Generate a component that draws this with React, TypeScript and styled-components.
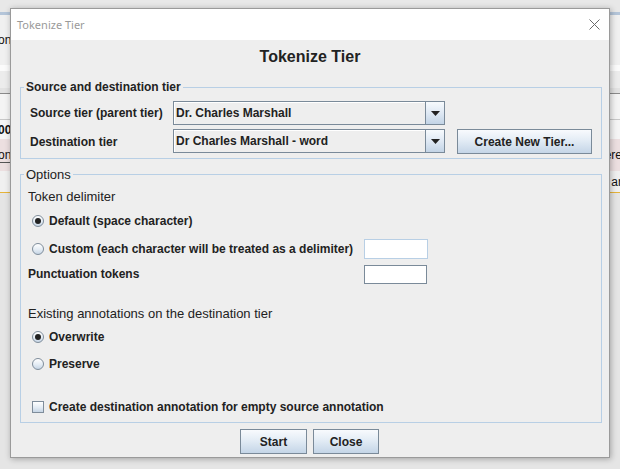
import React from "react";
import styled, { createGlobalStyle } from "styled-components";

const Global = createGlobalStyle`
  html, body { margin: 0; padding: 0; width: 620px; height: 469px; overflow: hidden; }
  body { font-family: "Liberation Sans", Arial, sans-serif; }
  * { box-sizing: border-box; }
`;

const Page = styled.div`
  position: relative;
  width: 620px;
  height: 469px;
  overflow: hidden;
  background: #e4e4e4;
`;

/* ---------- background application (mostly hidden by the dialog) ---------- */
const Backdrop = styled.div`
  display: flex;
  flex-direction: column;
  width: 620px;
`;

const Band = styled.div<{ $h: number; $bg: string; $line?: string }>`
  height: ${(p) => p.$h}px;
  background: ${(p) => p.$bg};
  border-bottom: ${(p) => (p.$line ? `1px solid ${p.$line}` : "none")};
  display: flex;
  justify-content: space-between;
  align-items: center;
  font-size: 12px;
  color: #111;
  overflow: hidden;
`;

const BgText = styled.span<{ $bold?: boolean; $under?: string }>`
  font-weight: ${(p) => (p.$bold ? 700 : 400)};
  margin-left: -2px;
  margin-right: -2px;
  border-bottom: ${(p) => (p.$under ? `1px solid ${p.$under}` : "none")};
  line-height: 14px;
`;

/* ---------- dialog ---------- */
const Dialog = styled.div`
  position: absolute;
  left: 10px;
  top: 8px;
  width: 600px;
  height: 450px;
  border: 1px solid #9a9a9a;
  display: flex;
  flex-direction: column;
  box-shadow: 1px 1px 6px rgba(0, 0, 0, 0.3);
`;

const TitleBar = styled.div`
  height: 31px;
  background: #ffffff;
  display: flex;
  align-items: center;
  justify-content: space-between;
  padding: 0 9px 0 6px;
`;

const TitleText = styled.span`
  font-family: "Noto Sans", "Open Sans", sans-serif;
  font-size: 11px;
  color: #9a9a9a;
`;

const Body = styled.div`
  flex: 1;
  background: #eeeeee;
  padding: 0 7px 0 9px;
  display: flex;
  flex-direction: column;
`;

const Header = styled.div`
  height: 34px;
  line-height: 34px;
  text-align: center;
  font-weight: 700;
  font-size: 16px;
  color: #222;
  padding-right: 2px;
`;

const Panel = styled.div<{ $mt: number; $pt: number; $pl: number; $pr: number; $pb: number }>`
  position: relative;
  margin-top: ${(p) => p.$mt}px;
  border: 1px solid #b8cfe5;
  padding: ${(p) => `${p.$pt}px ${p.$pr}px ${p.$pb}px ${p.$pl}px`};
`;

const Legend = styled.span<{ $bold?: boolean }>`
  position: absolute;
  top: -8px;
  left: 3px;
  padding: 0 2px;
  background: #eeeeee;
  font-size: ${(p) => (p.$bold ? 12 : 13)}px;
  line-height: 15px;
  font-weight: ${(p) => (p.$bold ? 700 : 400)};
  color: #222;
`;

const TierGrid = styled.div`
  display: grid;
  grid-template-columns: 143px 272px 147px;
  grid-template-rows: 24px 25px;
  row-gap: 4px;
`;

const FieldLabel = styled.span<{ $bold?: boolean }>`
  display: flex;
  align-items: center;
  font-size: ${(p) => (p.$bold ? 12 : 13)}px;
  font-weight: ${(p) => (p.$bold ? 700 : 400)};
  color: #222;
  white-space: nowrap;
`;

const Combo = styled.div`
  display: flex;
  height: 24px;
  border: 1px solid #7a8a99;
  background: #eeeeee;
`;

const ComboText = styled.div`
  flex: 1;
  display: flex;
  align-items: center;
  padding-left: 2px;
  font-size: 12px;
  font-weight: 700;
  color: #222;
  box-shadow: inset 1px 1px 0 #ffffff;
`;

const ComboArrow = styled.div`
  width: 19px;
  border-left: 1px solid #7a8a99;
  background: linear-gradient(to bottom, #f7fafd 0%, #dfe9f4 50%, #c3d4e6 100%);
  display: flex;
  align-items: center;
  justify-content: center;
`;

const Button = styled.button<{ $w: number }>`
  width: ${(p) => p.$w}px;
  height: 25px;
  justify-self: end;
  border: 1px solid #7a8a99;
  border-radius: 0;
  padding: 0;
  background: linear-gradient(to bottom, #f8fafd 0%, #e3ecf5 45%, #c4d5e7 100%);
  font-family: "Liberation Sans", Arial, sans-serif;
  font-size: 12px;
  font-weight: 700;
  color: #222;
`;

const Row = styled.div<{ $mt: number; $h: number }>`
  display: flex;
  align-items: center;
  margin-top: ${(p) => p.$mt}px;
  height: ${(p) => p.$h}px;
`;

const Choice = styled.label`
  display: flex;
  align-items: center;
  padding-left: 4px;
  font-size: 12px;
  font-weight: 700;
  color: #222;
  white-space: nowrap;
`;

const RadioDot = styled.span<{ $on?: boolean }>`
  width: 12px;
  height: 12px;
  margin-right: 5px;
  border-radius: 50%;
  border: 1px solid #7f8d9b;
  background: linear-gradient(to bottom, #ffffff 0%, #e4ecf4 55%, #c6d5e5 100%);
  display: flex;
  align-items: center;
  justify-content: center;
  &::after {
    content: "";
    display: ${(p) => (p.$on ? "block" : "none")};
    width: 6px;
    height: 6px;
    border-radius: 50%;
    background: #222;
  }
`;

const CheckBox = styled.span`
  width: 12px;
  height: 12px;
  margin-right: 5px;
  border: 1px solid #7f8d9b;
  background: linear-gradient(to bottom, #ffffff 0%, #e4ecf4 55%, #c6d5e5 100%);
`;

const OptGrid = styled.div`
  margin-top: 6px;
  display: grid;
  grid-template-columns: 336px 64px;
  grid-template-rows: 22px 20px;
  row-gap: 4px;
  align-items: center;
`;

const TextBox = styled.div<{ $dark?: boolean }>`
  width: ${(p) => (p.$dark ? 63 : 64)}px;
  height: ${(p) => (p.$dark ? 19 : 20)}px;
  background: #ffffff;
  border: 1px solid ${(p) => (p.$dark ? "#7a8a99" : "#b8cfe5")};
`;

const ButtonRow = styled.div`
  margin-top: 6px;
  display: flex;
  justify-content: center;
  gap: 6px;
  padding-right: 3px;
`;

const CloseIcon = () => (
  <svg width="11" height="11" viewBox="0 0 11 11">
    <path d="M0.5 0.5 L10.5 10.5 M10.5 0.5 L0.5 10.5" stroke="#6a6a6a" strokeWidth="1" fill="none" />
  </svg>
);

const Triangle = () => (
  <svg width="9" height="5" viewBox="0 0 9 5">
    <polygon points="0,0 9,0 4.5,5" fill="#222" />
  </svg>
);

export default function App() {
  return (
    <Page>
      <Global />
      <Backdrop>
        <Band $h={12} $bg="#e8e8e8" />
        <Band $h={3} $bg="#b4c5d9" />
        <Band $h={50} $bg="#f0f0f0">
          <BgText>on</BgText>
          <span />
        </Band>
        <Band $h={6} $bg="#fbfbfb" />
        <Band $h={17} $bg="#ececec" />
        <Band $h={6} $bg="#e2e2e2" $line="#8a8a8a" />
        <Band $h={26} $bg="#f4f4f4" $line="#c8c8c8" />
        <Band $h={19} $bg="#f5f5f5">
          <BgText $bold>00:</BgText>
          <span />
        </Band>
        <Band $h={32} $bg="#ecdfe0">
          <BgText $under="#555">on</BgText>
          <BgText>ere</BgText>
        </Band>
        <Band $h={22} $bg="#f0f0f0" $line="#e6b43a">
          <span />
          <BgText>ar</BgText>
        </Band>
        <Band $h={280} $bg="#e5e5e5" />
      </Backdrop>

      <Dialog>
        <TitleBar>
          <TitleText>Tokenize Tier</TitleText>
          <CloseIcon />
        </TitleBar>
        <Body>
          <Header>Tokenize Tier</Header>

          <Panel $mt={13} $pt={13} $pl={9} $pr={8} $pb={4}>
            <Legend $bold>Source and destination tier</Legend>
            <TierGrid>
              <FieldLabel $bold>Source tier (parent tier)</FieldLabel>
              <Combo>
                <ComboText>Dr. Charles Marshall</ComboText>
                <ComboArrow>
                  <Triangle />
                </ComboArrow>
              </Combo>
              <span />
              <FieldLabel $bold>Destination tier</FieldLabel>
              <Combo>
                <ComboText>Dr Charles Marshall - word</ComboText>
                <ComboArrow>
                  <Triangle />
                </ComboArrow>
              </Combo>
              <Button $w={135}>Create New Tier...</Button>
            </TierGrid>
          </Panel>

          <Panel $mt={15} $pt={12} $pl={7} $pr={8} $pb={4}>
            <Legend>Options</Legend>
            <Row $mt={0} $h={18}>
              <FieldLabel>Token delimiter</FieldLabel>
            </Row>
            <Row $mt={5} $h={22}>
              <Choice>
                <RadioDot $on />
                Default (space character)
              </Choice>
            </Row>
            <OptGrid>
              <Choice>
                <RadioDot />
                Custom (each character will be treated as a delimiter)
              </Choice>
              <TextBox />
              <FieldLabel $bold>Punctuation tokens</FieldLabel>
              <TextBox $dark />
            </OptGrid>
            <Row $mt={20} $h={18}>
              <FieldLabel>Existing annotations on the destination tier</FieldLabel>
            </Row>
            <Row $mt={4} $h={22}>
              <Choice>
                <RadioDot $on />
                Overwrite
              </Choice>
            </Row>
            <Row $mt={5} $h={22}>
              <Choice>
                <RadioDot />
                Preserve
              </Choice>
            </Row>
            <Row $mt={21} $h={22}>
              <Choice>
                <CheckBox />
                Create destination annotation for empty source annotation
              </Choice>
            </Row>
          </Panel>

          <ButtonRow>
            <Button $w={67}>Start</Button>
            <Button $w={66}>Close</Button>
          </ButtonRow>
        </Body>
      </Dialog>
    </Page>
  );
}
